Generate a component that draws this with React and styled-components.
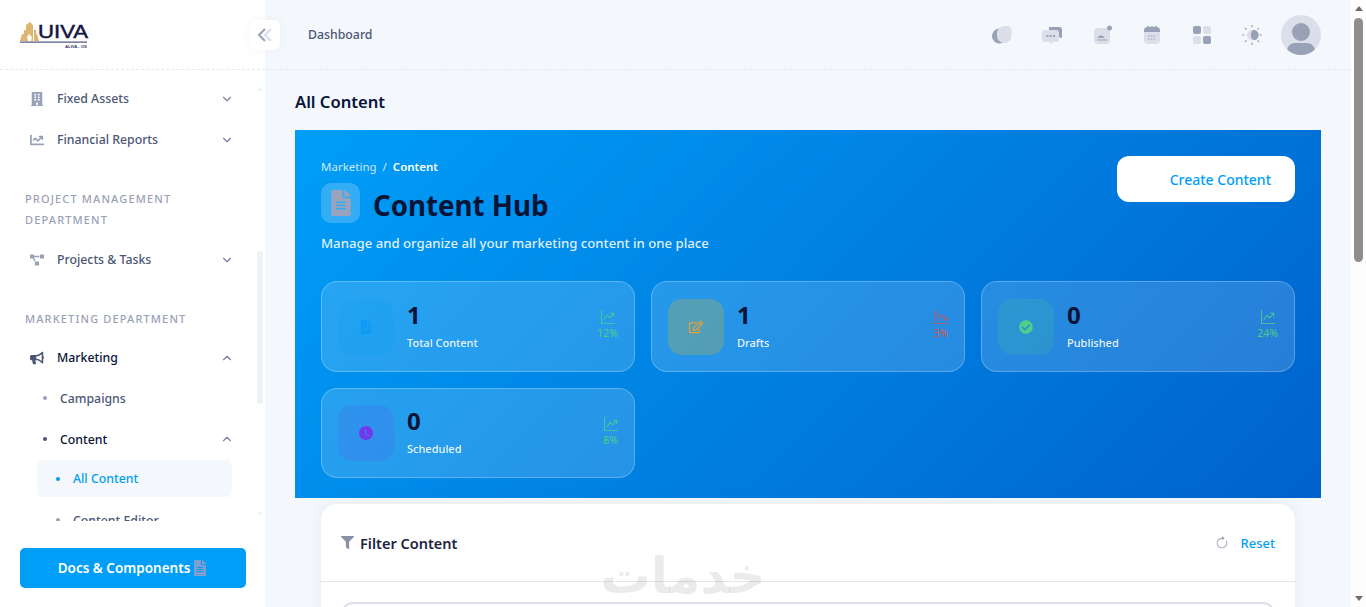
import React from "react";
import styled, { createGlobalStyle } from "styled-components";
import { ChevronDown, ChevronUp } from "lucide-react";
import { FaBuilding, FaChartLine, FaBullhorn, FaProjectDiagram, FaFilter, FaFileAlt, FaCheckCircle, FaRegEdit } from "react-icons/fa";
import { BsGraphUpArrow, BsGraphDownArrow, BsArrowClockwise, BsClockFill } from "react-icons/bs";

const FONT = `"Noto Sans", Inter, sans-serif`;

const Global = createGlobalStyle`
  html, body { margin: 0; padding: 0; height: 100%; overflow: hidden; }
  body { font-family: ${FONT}; background: #f4f7fb; color: #071437; }
  * { box-sizing: border-box; }
`;

const Shell = styled.div`
  display: flex;
  height: 607px;
  position: relative;
  overflow: hidden;
`;

const Sidebar = styled.aside`
  width: 265px;
  flex: none;
  background: #fff;
  display: flex;
  flex-direction: column;
  position: relative;
`;

const Brand = styled.div`
  height: 70px;
  flex: none;
  display: flex;
  align-items: center;
  padding-left: 20px;
  border-bottom: 1px dashed #e6e9f0;
`;

const Toggle = styled.button`
  position: absolute;
  left: 250px;
  top: 20px;
  width: 30px;
  height: 30px;
  padding: 0;
  border: 0;
  border-radius: 6px;
  background: #fff;
  display: flex;
  align-items: center;
  justify-content: center;
  box-shadow: 0 0 10px rgba(76, 87, 125, 0.06);
  z-index: 3;
`;

const NavClip = styled.nav`
  height: 451px;
  flex: none;
  overflow: hidden;
  position: relative;
  padding: 8px 31px 0 25px;
`;

const NavBar = styled.div`
  position: absolute;
  left: 257px;
  top: 17px;
  width: 6px;
  height: 429px;
  display: flex;
  flex-direction: column;
  align-items: center;
`;

const NavThumb = styled.span`
  width: 6px;
  height: 153px;
  margin-top: 160px;
  border-radius: 3px;
  background: #eff1f5;
`;

const Tri = styled.i`
  width: 0;
  height: 0;
  flex: none;
  border-left: ${(p) => p.$s}px solid transparent;
  border-right: ${(p) => p.$s}px solid transparent;
  ${(p) => (p.$down ? "border-top" : "border-bottom")}: ${(p) => p.$h}px solid ${(p) => p.$c};
`;

const Grow = styled.span`
  flex: 1;
`;

const SectionLabel = styled.div`
  font-size: 11px;
  font-weight: 500;
  line-height: 21px;
  letter-spacing: 1.15px;
  text-transform: uppercase;
  color: #99a1b7;
  margin: 28px 0 ${(p) => (p.$tight ? 8 : 9)}px;
`;

const Row = styled.div`
  height: 41px;
  display: flex;
  align-items: center;
  margin-left: 5px;
  font-size: 12.3px;
  font-weight: 500;
  color: ${(p) => (p.$open ? "#071437" : "#4b5675")};
`;

const RowIcon = styled.span`
  width: 27px;
  flex: none;
  display: flex;
  align-items: center;
  font-size: 14px;
  color: ${(p) => (p.$open ? "#4b5675" : "#99a1b7")};
`;

const RowText = styled.span`
  flex: 1;
`;

const Caret = styled.span`
  display: flex;
  color: #78829d;
`;

const SubRow = styled.div`
  height: ${(p) => p.$h}px;
  margin-left: 18px;
  display: flex;
  align-items: center;
  font-size: 12.3px;
  font-weight: 500;
  color: ${(p) => (p.$open ? "#071437" : "#4b5675")};
`;

const Bullet = styled.i`
  width: 4px;
  height: 4px;
  border-radius: 50%;
  flex: none;
  margin-right: 13px;
  background: ${(p) => p.$c || "#99a1b7"};
`;

const ActiveRow = styled.div`
  height: 37px;
  margin: 0 0 3px 12px;
  width: 195px;
  border-radius: 6px;
  background: #f4f7fb;
  display: flex;
  align-items: center;
  padding-left: 19px;
  font-size: 12.3px;
  font-weight: 500;
  color: #009ef7;
`;

const Nested = styled.div`
  height: 40px;
  margin-left: 31px;
  display: flex;
  align-items: center;
  font-size: 12.3px;
  font-weight: 500;
  color: #4b5675;
`;

const SideFoot = styled.div`
  padding: 27px 19px 19px 20px;
  flex: 1;
`;

const DocsButton = styled.button`
  width: 226px;
  height: 40px;
  border: 0;
  border-radius: 5px;
  background: #009ef7;
  color: #fff;
  font: 600 13.5px ${FONT};
  display: flex;
  align-items: center;
  justify-content: center;
  gap: 2px;
  svg { color: #7d9fcf; }
`;

const Main = styled.main`
  flex: 1;
  min-width: 0;
  overflow: hidden;
  background: #f4f7fb;
`;

const PageBar = styled.div`
  width: 15px;
  flex: none;
  background: #fdfdfd;
  display: flex;
  flex-direction: column;
  align-items: center;
  padding: 6px 0;
`;

const PageThumb = styled.span`
  width: 9px;
  height: 244px;
  margin-top: 7px;
  border-radius: 5px;
  background: #8f8d8e;
`;

const TopBar = styled.header`
  height: 70px;
  display: flex;
  align-items: center;
  padding: 0 30px 0 43px;
  border-bottom: 1px dashed #e6e9f0;
`;

const Crumb = styled.div`
  flex: 1;
  font-size: 12.3px;
  font-weight: 500;
  color: #4b5675;
`;

const TopIcon = styled.span`
  width: 50px;
  display: flex;
  justify-content: center;
`;

const Avatar = styled.span`
  width: 40px;
  height: 40px;
  margin-left: 4px;
  border-radius: 50%;
  overflow: hidden;
  display: block;
  background: #dbdfe9;
`;

const Page = styled.div`
  padding: 0 30px 30px;
`;

const PageTitle = styled.h1`
  margin: 0;
  padding-top: 21px;
  height: 60px;
  font-size: 16.6px;
  line-height: 22px;
  font-weight: 600;
  color: #071437;
`;

const Hero = styled.section`
  background: linear-gradient(135deg, #009ef7 0%, #0062cc 100%);
  padding: 26px 26px 20px;
  height: 368px;
`;

const HeroTop = styled.div`
  display: flex;
  justify-content: space-between;
  align-items: flex-start;
  height: 125px;
`;

const Breadcrumb = styled.div`
  font-size: 11.5px;
  line-height: 22px;
  color: rgba(255, 255, 255, 0.8);
  display: flex;
  gap: 6px;
  b { color: #fff; font-weight: 600; }
`;

const TitleRow = styled.div`
  display: flex;
  align-items: center;
  gap: 13px;
  margin-top: 5px;
`;

const HeroTile = styled.span`
  width: 39px;
  height: 40px;
  border-radius: 10px;
  background: rgba(255, 255, 255, 0.2);
  display: flex;
  align-items: center;
  justify-content: center;
  color: #9aa3bc;
  font-size: 26px;
`;

const HeroTitle = styled.h2`
  margin: 2px 0 -2px;
  font-size: 27.7px;
  line-height: 40px;
  font-weight: 700;
  color: #071437;
`;

const HeroSub = styled.p`
  margin: 10px 0 0;
  font-size: 13.2px;
  line-height: 20px;
  font-weight: 500;
  color: rgba(255, 255, 255, 0.88);
`;

const CreateButton = styled.button`
  width: 178px;
  height: 46px;
  border: 0;
  border-radius: 12px;
  background: #fff;
  color: #009ef7;
  font: 500 14px ${FONT};
  text-align: right;
  padding: 0 24px 0 0;
`;

const StatGrid = styled.div`
  display: grid;
  grid-template-columns: repeat(3, 1fr);
  gap: 16px;
`;

const StatCard = styled.div`
  height: ${(p) => p.$h}px;
  border: 1px solid rgba(255, 255, 255, 0.25);
  border-radius: 16px;
  background: rgba(255, 255, 255, 0.15);
  padding: 16px;
  display: flex;
  align-items: center;
  gap: 13px;
`;

const StatTile = styled.span`
  width: 56px;
  height: 56px;
  flex: none;
  border-radius: 14px;
  background: ${(p) => p.$bg};
  color: ${(p) => p.$c};
  font-size: 14px;
  display: flex;
  align-items: center;
  justify-content: center;
`;

const StatBody = styled.div`
  flex: 1;
`;

const StatValue = styled.div`
  font-size: 24px;
  line-height: 30px;
  font-weight: 700;
  color: #071437;
  margin-top: -2px;
`;

const StatLabel = styled.div`
  margin-top: 4px;
  font-size: 11px;
  line-height: 18px;
  font-weight: 500;
  color: rgba(255, 255, 255, 0.92);
`;

const Trend = styled.div`
  display: flex;
  flex-direction: column;
  align-items: center;
  align-self: flex-start;
  gap: 3px;
  margin-top: 12px;
  font-size: 10.5px;
  line-height: 12px;
  color: ${(p) => (p.$down ? "#d9534f" : "#50cd89")};
`;

const FilterCard = styled.section`
  margin: 6px 26px 0;
  background: #fff;
  border-radius: 16px;
  box-shadow: 0 0 14px rgba(76, 87, 125, 0.08);
`;

const FilterHead = styled.div`
  height: 78px;
  display: flex;
  align-items: center;
  padding: 0 20px;
  border-bottom: 1px solid #e4e6ef;
`;

const FilterTitle = styled.div`
  flex: 1;
  display: flex;
  align-items: center;
  gap: 6px;
  font-size: 14.5px;
  font-weight: 600;
  color: #1e2340;
  svg { color: #8a90a5; font-size: 13px; margin-top: -1px; }
`;

const ResetLink = styled.div`
  display: flex;
  align-items: center;
  gap: 12px;
  font-size: 13px;
  font-weight: 500;
  color: #009ef7;
  svg { color: #99a1b7; font-size: 14px; }
`;

const FilterBody = styled.div`
  padding: 20px;
`;

const SearchInput = styled.input`
  display: block;
  width: 100%;
  height: 44px;
  border: 2px solid #dbdfe9;
  border-radius: 12px;
  background: #fff;
`;

const Watermark = styled.div`
  position: absolute;
  left: 590px;
  top: 546px;
  width: 186px;
  text-align: center;
  font: 700 50px/60px "DejaVu Sans", sans-serif;
  color: rgba(60, 60, 60, 0.1);
  pointer-events: none;
  z-index: 4;
`;

const dark = "#99a1b7";
const light = "#dbdfe9";

const Logo = () => (
  <svg width="70" height="28" viewBox="0 0 70 28" role="img" aria-label="UIVA">
    <path fill="#dcb56f" d="M0 20 2 13h2V9h2V4l4-3 3 3v16h-2l1-4-3-3-2 3 1 4zM14 20V9h2v4h1l2 7z" />
    <text x="18" y="17" fontFamily="Liberation Sans" fontSize="19" stroke="#12173f" strokeWidth="0.5" fill="#12173f" textLength="50" lengthAdjust="spacingAndGlyphs">UIVA</text>
    <rect x="0" y="20.5" width="67" height="1.2" fill="#4d5380" />
    <text x="45" y="27" fontFamily="Liberation Sans" fontWeight="700" fontSize="4.4" fill="#3b4068" textLength="22">ALIVA - OS</text>
  </svg>
);

const DoubleLeft = () => (
  <svg width="16" height="16" viewBox="0 0 16 16" fill="none" strokeWidth="2">
    <path d="M8 2 2 8l6 6" stroke="#99a1b7" />
    <path d="M14 2 8 8l6 6" stroke="#dbdfe9" />
  </svg>
);

const ChatsIcon = () => (
  <svg width="24" height="24" viewBox="0 0 24 24">
    <circle cx="9.5" cy="13" r="7.5" fill={dark} />
    <path d="M14 3h3a4.5 4.5 0 0 1 4.5 4.5V13a7 7 0 0 1-7 7h-1A7 7 0 0 1 7 13v-2.5A7.5 7.5 0 0 1 14 3z" fill={light} />
  </svg>
);
const BubbleIcon = () => (
  <svg width="24" height="24" viewBox="0 0 24 24">
    <path d="M9 4h10a3 3 0 0 1 3 3v8l-4-1-9-6z" fill={dark} />
    <path d="M5 7h11a3 3 0 0 1 3 3v6a3 3 0 0 1-3 3h-3l-2 2-2-2H5a3 3 0 0 1-3-3v-6a3 3 0 0 1 3-3z" fill={light} />
    <g fill={dark}><rect x="6.5" y="12" width="2" height="2" /><rect x="9.7" y="12" width="2" height="2" /><rect x="13" y="12" width="2" height="2" /></g>
  </svg>
);
const NoteIcon = () => (
  <svg width="24" height="24" viewBox="0 0 24 24">
    <rect x="4" y="5" width="16" height="16" rx="4" fill={light} />
    <circle cx="19.5" cy="5" r="2.5" fill={dark} />
    <path d="M9.5 13h3l1.5 1.5H8zM7 17h10" stroke={dark} strokeWidth="1" fill={dark} />
  </svg>
);
const CalendarIcon = () => (
  <svg width="24" height="24" viewBox="0 0 24 24">
    <rect x="4" y="4" width="16" height="17" rx="4" fill={light} />
    <path d="M4 9V8a4 4 0 0 1 4-4h8a4 4 0 0 1 4 4v1z" fill={dark} />
    <path d="M8 3v3M12 3v3M16 3v3" stroke={dark} strokeWidth="1.6" />
    <path d="M8 13h8M8 16h8" stroke={dark} strokeWidth="1.2" strokeDasharray="1.6 1.2" />
  </svg>
);
const GridIcon = () => (
  <svg width="24" height="24" viewBox="0 0 24 24">
    <rect x="3" y="3" width="8" height="8" rx="2" fill={dark} />
    <rect x="13" y="3" width="8" height="8" rx="2" fill={light} />
    <rect x="3" y="13" width="8" height="8" rx="2" fill={light} />
    <rect x="13" y="13" width="8" height="8" rx="2" fill={dark} />
  </svg>
);
const SunIcon = () => (
  <svg width="24" height="24" viewBox="0 0 24 24">
    <circle cx="12" cy="12" r="5" fill={light} />
    <path d="M12 6.8a5.2 5.2 0 0 1 0 10.4c-2-1-2.6-3.2-2.6-5.2S10 7.8 12 6.8z" fill={dark} transform="translate(1.5 0)" />
    <path d="M12 2v2.4M12 19.6V22M2 12h2.4M19.6 12H22M5 5l1.6 1.6M17.4 17.4 19 19M5 19l1.6-1.6M17.4 6.6 19 5" stroke={dark} strokeWidth="1.2" />
  </svg>
);
const Person = () => (
  <svg width="40" height="40" viewBox="0 0 40 40">
    <circle cx="20" cy="17" r="9" fill={dark} />
    <path d="M6 40v-3c0-6 4-9 8-9h12c4 0 8 3 8 9v3z" fill={dark} />
  </svg>
);

const NavRow = ({ icon: Icon, open, children }) => (
  <Row $open={open}>
    <RowIcon $open={open}><Icon /></RowIcon>
    <RowText>{children}</RowText>
    <Caret>{open ? <ChevronUp size={14} /> : <ChevronDown size={14} />}</Caret>
  </Row>
);

const stats = [
  { value: "1", label: "Total Content", trend: "12%", bg: "rgba(0,158,247,.12)", c: "#0d9bf5", Icon: FaFileAlt, h: 91 },
  { value: "1", label: "Drafts", trend: "3%", down: true, bg: "rgba(246,192,0,.22)", c: "#e6a03c", Icon: FaRegEdit, h: 91 },
  { value: "0", label: "Published", trend: "24%", bg: "rgba(80,205,137,.16)", c: "#50cd89", Icon: FaCheckCircle, h: 91 },
  { value: "0", label: "Scheduled", trend: "8%", bg: "rgba(114,57,234,.12)", c: "#7239ea", Icon: BsClockFill, h: 90 },
];

export default function App() {
  return (
    <Shell>
      <Global />
      <Sidebar>
        <Brand><Logo /></Brand>
        <Toggle aria-label="Collapse"><DoubleLeft /></Toggle>
        <NavClip>
          <NavRow icon={FaBuilding}>Fixed Assets</NavRow>
          <NavRow icon={FaChartLine}>Financial Reports</NavRow>
          <SectionLabel>Project Management Department</SectionLabel>
          <NavRow icon={FaProjectDiagram}>Projects &amp; Tasks</NavRow>
          <SectionLabel $tight>Marketing Department</SectionLabel>
          <NavRow icon={FaBullhorn} open>Marketing</NavRow>
          <SubRow $h={40}><Bullet />Campaigns</SubRow>
          <SubRow $h={42} $open>
            <Bullet $c="#4b5675" />
            <RowText>Content</RowText>
            <Caret><ChevronUp size={14} /></Caret>
          </SubRow>
          <ActiveRow><Bullet $c="#009ef7" />All Content</ActiveRow>
          <Nested><Bullet />Content Editor</Nested>
          <NavBar>
            <Tri $s={3} $h={4} $c="#eff1f5" />
            <NavThumb />
            <Grow />
            <Tri $down $s={3} $h={4} $c="#eff1f5" />
          </NavBar>
        </NavClip>
        <SideFoot>
          <DocsButton>Docs &amp; Components <FaFileAlt size={16} /></DocsButton>
        </SideFoot>
      </Sidebar>
      <Main>
        <TopBar>
          <Crumb>Dashboard</Crumb>
          <TopIcon><ChatsIcon /></TopIcon>
          <TopIcon><BubbleIcon /></TopIcon>
          <TopIcon><NoteIcon /></TopIcon>
          <TopIcon><CalendarIcon /></TopIcon>
          <TopIcon><GridIcon /></TopIcon>
          <TopIcon><SunIcon /></TopIcon>
          <Avatar><Person /></Avatar>
        </TopBar>
        <Page>
          <PageTitle>All Content</PageTitle>
          <Hero>
            <HeroTop>
              <div>
                <Breadcrumb>Marketing <span>/</span> <b>Content</b></Breadcrumb>
                <TitleRow>
                  <HeroTile><FaFileAlt /></HeroTile>
                  <HeroTitle>Content Hub</HeroTitle>
                </TitleRow>
                <HeroSub>Manage and organize all your marketing content in one place</HeroSub>
              </div>
              <CreateButton>Create Content</CreateButton>
            </HeroTop>
            <StatGrid>
              {stats.map((s) => (
                <StatCard key={s.label} $h={s.h}>
                  <StatTile $bg={s.bg} $c={s.c}><s.Icon /></StatTile>
                  <StatBody>
                    <StatValue>{s.value}</StatValue>
                    <StatLabel>{s.label}</StatLabel>
                  </StatBody>
                  <Trend $down={s.down}>
                    {s.down ? <BsGraphDownArrow size={14} /> : <BsGraphUpArrow size={14} />}
                    {s.trend}
                  </Trend>
                </StatCard>
              ))}
            </StatGrid>
          </Hero>
          <FilterCard>
            <FilterHead>
              <FilterTitle><FaFilter />Filter Content</FilterTitle>
              <ResetLink><BsArrowClockwise />Reset</ResetLink>
            </FilterHead>
            <FilterBody>
              <SearchInput aria-label="Search" />
            </FilterBody>
          </FilterCard>
        </Page>
      </Main>
      <PageBar>
        <Tri $s={4.5} $h={5} $c="#6f6d6e" />
        <PageThumb />
        <Grow />
        <Tri $down $s={4.5} $h={5} $c="#6f6d6e" />
      </PageBar>
      <Watermark dir="rtl">خدمات</Watermark>
    </Shell>
  );
}
